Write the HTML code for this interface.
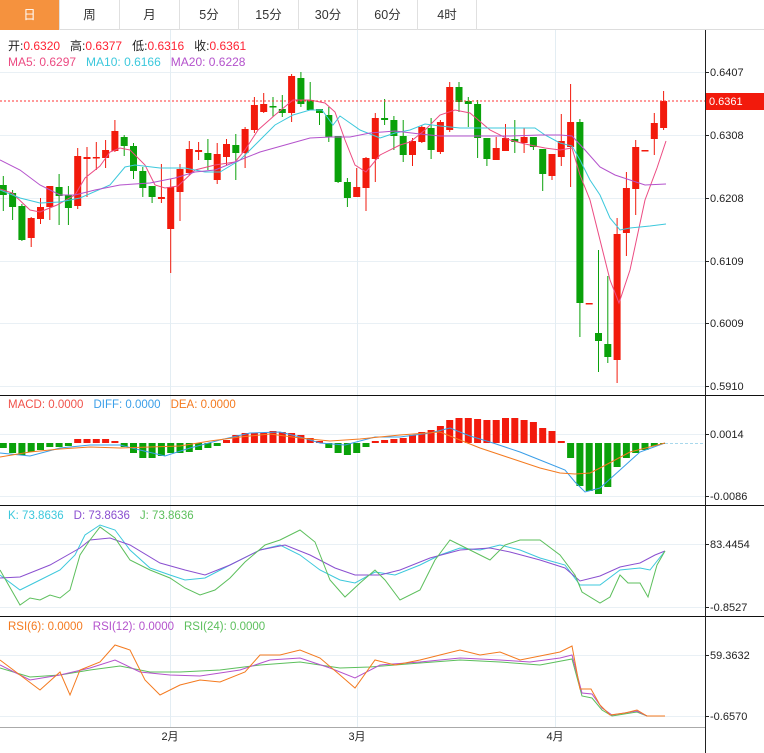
<!DOCTYPE html>
<html><head><meta charset="utf-8"><style>
*{margin:0;padding:0}
body{width:764px;height:753px;background:#fff;overflow:hidden;font-family:"Liberation Sans","Noto Sans CJK SC",sans-serif;position:relative}
.tabs{position:absolute;left:0;top:0;height:30px;width:764px;border-bottom:1px solid #ddd;box-sizing:border-box}
.tab{position:absolute;top:0;height:30px;line-height:30px;text-align:center;font-size:12.5px;color:#333;border-right:1px solid #e0e0e0;box-sizing:border-box}
.tab.on{background:#f5923e;color:#fff}
svg{position:absolute;left:0;top:0}
</style></head><body>
<div class="tabs">
<div class="tab on" style="left:0;width:60px">日</div>
<div class="tab" style="left:60px;width:60px">周</div>
<div class="tab" style="left:120px;width:60px">月</div>
<div class="tab" style="left:180px;width:59px">5分</div>
<div class="tab" style="left:239px;width:60px">15分</div>
<div class="tab" style="left:299px;width:59px">30分</div>
<div class="tab" style="left:358px;width:60px">60分</div>
<div class="tab" style="left:418px;width:59px">4时</div>
</div>
<svg id="s" width="764" height="753" xmlns="http://www.w3.org/2000/svg" font-family="Liberation Sans, Noto Sans CJK SC, sans-serif" font-size="11"></svg>
<script>
var s=document.getElementById('s'),h='';
function L(x1,y1,x2,y2,c,w,d){h+='<line x1="'+x1+'" y1="'+y1+'" x2="'+x2+'" y2="'+y2+'" stroke="'+c+'" stroke-width="'+(w||1)+'"'+(d?' stroke-dasharray="'+d+'" shape-rendering="crispEdges"':'')+'/>';}
function T(x,y,t,c,a){h+='<text x="'+x+'" y="'+y+'" fill="'+c+'"'+(a?' text-anchor="'+a+'"':'')+'>'+t+'</text>';}
function P(pts,c){h+='<polyline fill="none" stroke="'+c+'" stroke-width="1" points="'+pts.map(function(p){return p.join(',')}).join(' ')+'"/>';}
[72,135,198,261,323,386,434,496,544,607,655,716].forEach(function(y){L(0,y+.5,705,y+.5,'#e9f0f5');});
[170,357,555].forEach(function(x){L(x+.5,30,x+.5,727,'#e3edf3');});
[395,505,616].forEach(function(y){L(0,y+.5,764,y+.5,'#111');});
L(0,727.5,705,727.5,'#aaa');
L(705.5,30,705.5,753,'#222');
var ax=[[72,'0.6407'],[135,'0.6308'],[198,'0.6208'],[261,'0.6109'],[323,'0.6009'],[386,'0.5910'],[434,'0.0014'],[496,'-0.0086'],[544,'83.4454'],[607,'-0.8527'],[655,'59.3632'],[716,'-0.6570']];
ax.forEach(function(a){L(705,a[0]+.5,709,a[0]+.5,'#222');T(710,a[0]+4,a[1],'#222');});
T(170,740,'2月','#222','middle');T(357,740,'3月','#222','middle');T(555,740,'4月','#222','middle');
var C=[[185,195,176,211,'g'],[193,207,190,220,'g'],[206,240,204,241,'g'],[238,218,247,217,'r'],[219,207,224,198,'r'],[207,186,220,186,'r'],[187,196,174,225,'g'],[195,208,186,225,'g'],[206,156,209,148,'r'],[159,157,197,147,'r'],[158,157,170,142,'r'],[158,150,168,140,'r'],[151,131,152,120,'r'],[137,146,135,156,'g'],[146,171,143,179,'g'],[171,188,167,197,'g'],[186,197,186,203,'g'],[199,197,203,164,'r'],[229,187,273,179,'r'],[192,169,221,164,'r'],[173,149,175,141,'r'],[152,150,160,142,'r'],[153,160,139,170,'g'],[180,154,184,143,'r'],[157,144,165,139,'r'],[145,153,134,180,'g'],[153,129,168,127,'r'],[130,105,133,97,'r'],[112,104,113,93,'r'],[106,107,97,117,'g'],[109,113,95,117,'g'],[113,76,122,74,'r'],[78,104,72,107,'g'],[100,110,82,110,'g'],[109,113,109,125,'g'],[115,137,107,142,'g'],[136,182,136,183,'g'],[182,198,178,207,'g'],[197,187,197,168,'r'],[188,158,211,157,'r'],[159,118,182,113,'r'],[118,120,99,125,'g'],[120,136,116,150,'g'],[136,155,120,162,'g'],[155,141,166,138,'r'],[142,127,143,125,'r'],[128,150,118,159,'g'],[152,122,154,120,'r'],[130,87,132,82,'r'],[87,102,82,112,'g'],[101,104,97,127,'g'],[104,138,100,158,'g'],[138,159,138,166,'g'],[160,148,160,137,'r'],[151,138,151,124,'r'],[139,142,120,153,'g'],[143,137,153,128,'r'],[137,147,137,150,'g'],[149,174,149,191,'g'],[176,154,180,154,'r'],[157,141,166,114,'r'],[147,122,187,84,'r'],[122,303,119,337,'g'],[304,303,304,303,'r'],[333,341,250,372,'g'],[344,357,276,363,'g'],[360,234,383,218,'r'],[233,188,256,172,'r'],[189,147,215,140,'r'],[151,150,151,150,'r'],[139,123,155,113,'r'],[128,101,130,91,'r']];
C.forEach(function(c,i){var x=3.3+9.3*i,col=c[4]=='r'?'#f21a0c':'#0aa10a';var t=Math.min(c[0],c[1]),b=Math.max(c[0],c[1]);
L(x,c[2],x,c[3],col,1);h+='<rect x="'+(x-3.5)+'" y="'+t+'" width="7" height="'+Math.max(b-t,1.5)+'" fill="'+col+'"/>';});
P([[0,189],[12,193],[30,210],[40,212],[57,205],[75,195],[85,178],[100,166],[110,152],[120,148],[130,150],[145,165],[155,185],[165,188],[178,186],[195,170],[215,165],[235,162],[245,150],[258,130],[275,115],[293,100],[310,100],[325,103],[335,112],[345,140],[355,165],[366,172],[380,155],[400,145],[410,142],[425,130],[440,115],[455,110],[470,113],[490,130],[510,140],[525,144],[545,148],[560,150],[572,148],[580,175],[590,200],[600,240],[610,280],[619,303],[630,270],[645,200],[657,168],[666,141]],'#ec4b82');
P([[0,190],[20,198],[40,203],[60,202],[80,198],[110,185],[125,167],[135,165],[160,168],[185,168],[205,172],[220,172],[240,160],[255,145],[275,125],[293,115],[310,110],[322,110],[333,125],[340,116],[360,130],[380,138],[395,133],[410,130],[425,124],[440,126],[460,128],[480,128],[520,128],[535,128],[545,135],[560,143],[572,146],[580,160],[590,180],[600,195],[610,218],[620,230],[630,228],[650,226],[666,224]],'#3cc8dc');
P([[0,160],[20,170],[40,185],[60,195],[75,195],[95,190],[120,185],[150,183],[175,178],[195,172],[215,170],[240,160],[260,152],[285,145],[310,138],[330,137],[350,137],[370,133],[395,131],[420,134],[440,136],[470,136],[510,136],[540,135],[560,135],[572,136],[585,150],[600,167],[615,175],[630,180],[645,185],[666,184]],'#b452cc');
h+='<line x1="0" y1="101" x2="705" y2="101" stroke="#f33" stroke-width="1" stroke-dasharray="2,2" shape-rendering="crispEdges"/>';
h+='<rect x="706" y="93" width="58" height="17" fill="#f21a0c"/>';T(709,105,'0.6361','#fff');
var M=[448,453,455,452,450,447,447,446,439,439,439,439,441,447,453,458,458,456,453,453,452,450,448,446,440,435,433,433,433,431,432,433,435,438,441,448,453,455,453,447,441,440,439,438,435,432,430,426,420,418,418,419,420,420,418,418,420,422,428,431,441,458,486,491,494,487,467,458,453,450,446,444];
M.forEach(function(y,i){var x=3.3+9.3*i,col=y>443?'#0aa10a':'#f21a0c';var t=Math.min(y,443),b=Math.max(y,443);h+='<rect x="'+(x-3.5)+'" y="'+t+'" width="7" height="'+(b-t)+'" fill="'+col+'"/>';});
L(665,443.5,705,443.5,'#a8d8ec',1,'3,2');
P([[0,453],[30,456],[60,448],[90,445],[120,445],[140,450],[165,456],[190,448],[220,440],[250,433],[280,432],[300,437],[320,443],[345,445],[375,437],[400,437],[430,433],[450,428],[470,436],[490,442],[520,452],[545,462],[565,470],[575,482],[585,492],[600,488],[620,470],[640,452],[665,443]],'#3a9ee8');
P([[0,457],[30,452],[60,449],[90,447],[120,448],[150,447],[180,446],[210,441],[240,437],[270,434],[300,438],[330,441],[360,439],[400,435],[440,432],[460,440],[480,448],[510,458],[540,468],[560,473],[575,474],[590,473],[600,468],[630,452],[665,443]],'#f47a1f');
P([[0,575],[20,590],[40,580],[60,570],[75,555],[85,535],[100,525],[115,530],[130,550],[150,568],[170,575],[185,580],[205,578],[230,565],[260,550],[280,545],[300,555],[320,570],[340,580],[355,583],[375,572],[395,575],[420,565],[440,555],[460,548],[480,550],[500,545],[520,550],[540,558],[565,565],[580,585],[600,585],[620,570],[640,568],[650,570],[665,551]],'#3cc8dc');
P([[0,578],[20,577],[50,565],[80,548],[90,540],[110,538],[130,545],[160,563],[185,570],[205,575],[230,565],[260,550],[285,545],[310,555],[335,568],[355,575],[380,575],[400,570],[430,558],[460,550],[490,548],[510,552],[540,560],[565,568],[580,581],[600,576],[620,567],[640,563],[655,555],[665,551]],'#8a4fd0');
P([[0,570],[20,605],[30,598],[40,600],[50,595],[60,598],[70,590],[80,555],[90,540],[100,527],[115,538],[130,560],[150,570],[170,578],[185,588],[200,595],[215,590],[230,578],[245,562],[265,545],[280,540],[300,530],[315,542],[330,580],[345,597],[360,583],[375,570],[385,580],[400,600],[420,590],[435,560],[450,540],[460,545],[470,550],[490,560],[505,545],[520,540],[540,540],[560,555],[575,575],[582,592],[600,603],[610,597],[620,575],[628,583],[640,583],[648,597],[657,565],[665,551]],'#5cbf5c');
P([[0,668],[30,677],[60,675],[90,670],[120,666],[150,672],[180,672],[220,670],[260,665],[300,662],[340,668],[370,667],[420,663],[460,660],[500,662],[540,665],[572,659],[582,696],[592,698],[602,710],[612,716],[637,712],[647,716],[665,716]],'#5cbf5c');
P([[0,665],[30,680],[60,675],[90,668],[115,660],[140,672],[170,675],[200,676],[240,670],[270,660],[300,658],[330,668],[355,678],[380,665],[420,662],[460,658],[500,660],[530,662],[560,658],[572,655],[582,693],[592,694],[602,708],[612,715],[637,711],[647,716],[665,716]],'#b452cc');
P([[0,660],[20,675],[40,690],[60,672],[70,695],[80,670],[100,662],[115,645],[130,650],[145,680],[160,695],[180,685],[200,680],[220,682],[245,672],[260,655],[280,655],[300,650],[320,658],[340,675],[355,688],[375,660],[395,665],[420,660],[440,655],[460,650],[480,655],[500,652],[520,660],[545,655],[560,652],[572,646],[580,689],[591,689],[600,705],[610,715],[625,713],[637,710],[647,716],[665,716]],'#f47a1f');
h+='<text x="8" y="50" font-size="12"><tspan fill="#222">开:</tspan><tspan fill="#f23">0.6320</tspan><tspan fill="#222" dx="10">高:</tspan><tspan fill="#f23">0.6377</tspan><tspan fill="#222" dx="10">低:</tspan><tspan fill="#f23">0.6316</tspan><tspan fill="#222" dx="10">收:</tspan><tspan fill="#f23">0.6361</tspan></text>';
h+='<text x="8" y="66" font-size="12"><tspan fill="#ec4b82">MA5: 0.6297</tspan><tspan fill="#3cc8dc" dx="10">MA10: 0.6166</tspan><tspan fill="#b452cc" dx="10">MA20: 0.6228</tspan></text>';
h+='<text x="8" y="408" font-size="11.5"><tspan fill="#f0524a">MACD: 0.0000</tspan><tspan fill="#3a9ee8" dx="10">DIFF: 0.0000</tspan><tspan fill="#f47a1f" dx="10">DEA: 0.0000</tspan></text>';
h+='<text x="8" y="519" font-size="11.5"><tspan fill="#3cc8dc">K: 73.8636</tspan><tspan fill="#8a4fd0" dx="10">D: 73.8636</tspan><tspan fill="#5cbf5c" dx="10">J: 73.8636</tspan></text>';
h+='<text x="8" y="630" font-size="11.5"><tspan fill="#f47a1f">RSI(6): 0.0000</tspan><tspan fill="#b452cc" dx="10">RSI(12): 0.0000</tspan><tspan fill="#5cbf5c" dx="10">RSI(24): 0.0000</tspan></text>';
s.innerHTML=h;
</script>
</body></html>
